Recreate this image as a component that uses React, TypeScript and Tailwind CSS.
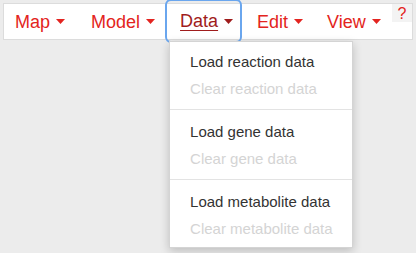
import React from "react";

const Caret = ({ dark }: { dark?: boolean }) => (
  <svg width="9" height="5" viewBox="0 0 9 5" className="ml-[6px]">
    <path d="M0 0 L9 0 L4.5 5 Z" fill={dark ? "#9f1c1c" : "#e32420"} />
  </svg>
);

export default function App() {
  const sections = [
    ["Load reaction data", "Clear reaction data"],
    ["Load gene data", "Clear gene data"],
    ["Load metabolite data", "Clear metabolite data"],
  ];
  return (
    <div
      className="w-[416px] h-[253px] bg-[#ececec] pt-[3px] px-[3px] overflow-hidden"
      style={{ fontFamily: '"Liberation Sans", Arial, sans-serif' }}
    >
      <div className="relative h-[37px] bg-white border border-[#dcdcdc] flex items-center text-[18px] leading-none text-[#e32420]">
        <div className="flex items-center h-full pl-[11px] pr-[26px]">
          <span>Map</span>
          <Caret />
        </div>
        <div className="flex items-center h-full pr-[12px]">
          <span>Model</span>
          <Caret />
        </div>
        <div className="relative h-full">
          <div className="flex items-center pl-[13px] pr-[7px] h-[40px] -mt-[3px] rounded-[4px] outline outline-2 outline-[#6aa6ee] text-[#9f1c1c]">
            <span className="underline underline-offset-[3px] decoration-1">Data</span>
            <Caret dark />
          </div>
          <div className="absolute left-[2px] top-[37px] w-[184px] bg-white border border-[#d4d4d4] shadow-[0_3px_9px_rgba(0,0,0,0.2)] pt-[6px] pb-[5px] text-[15px] z-10 whitespace-nowrap">
            {sections.map((s, i) => (
              <div key={i}>
                {i > 0 && <div className="h-px bg-[#e3e3e3] mt-[7px] mb-[8px]" />}
                <div className="h-[27px] flex items-center pl-5 text-[#333]">{s[0]}</div>
                <div className="h-[27px] flex items-center pl-5 text-[#d4d4d4]">{s[1]}</div>
              </div>
            ))}
          </div>
        </div>
        <div className="flex items-center h-full pl-[17px] pr-[24px]">
          <span>Edit</span>
          <Caret />
        </div>
        <div className="flex items-center h-full">
          <span>View</span>
          <Caret />
        </div>
        <div className="ml-auto self-start w-[20px] h-[18px] bg-[#f3f3f3] flex items-start justify-center text-[16px] pt-[2px]">
          ?
        </div>
      </div>
    </div>
  );
}
